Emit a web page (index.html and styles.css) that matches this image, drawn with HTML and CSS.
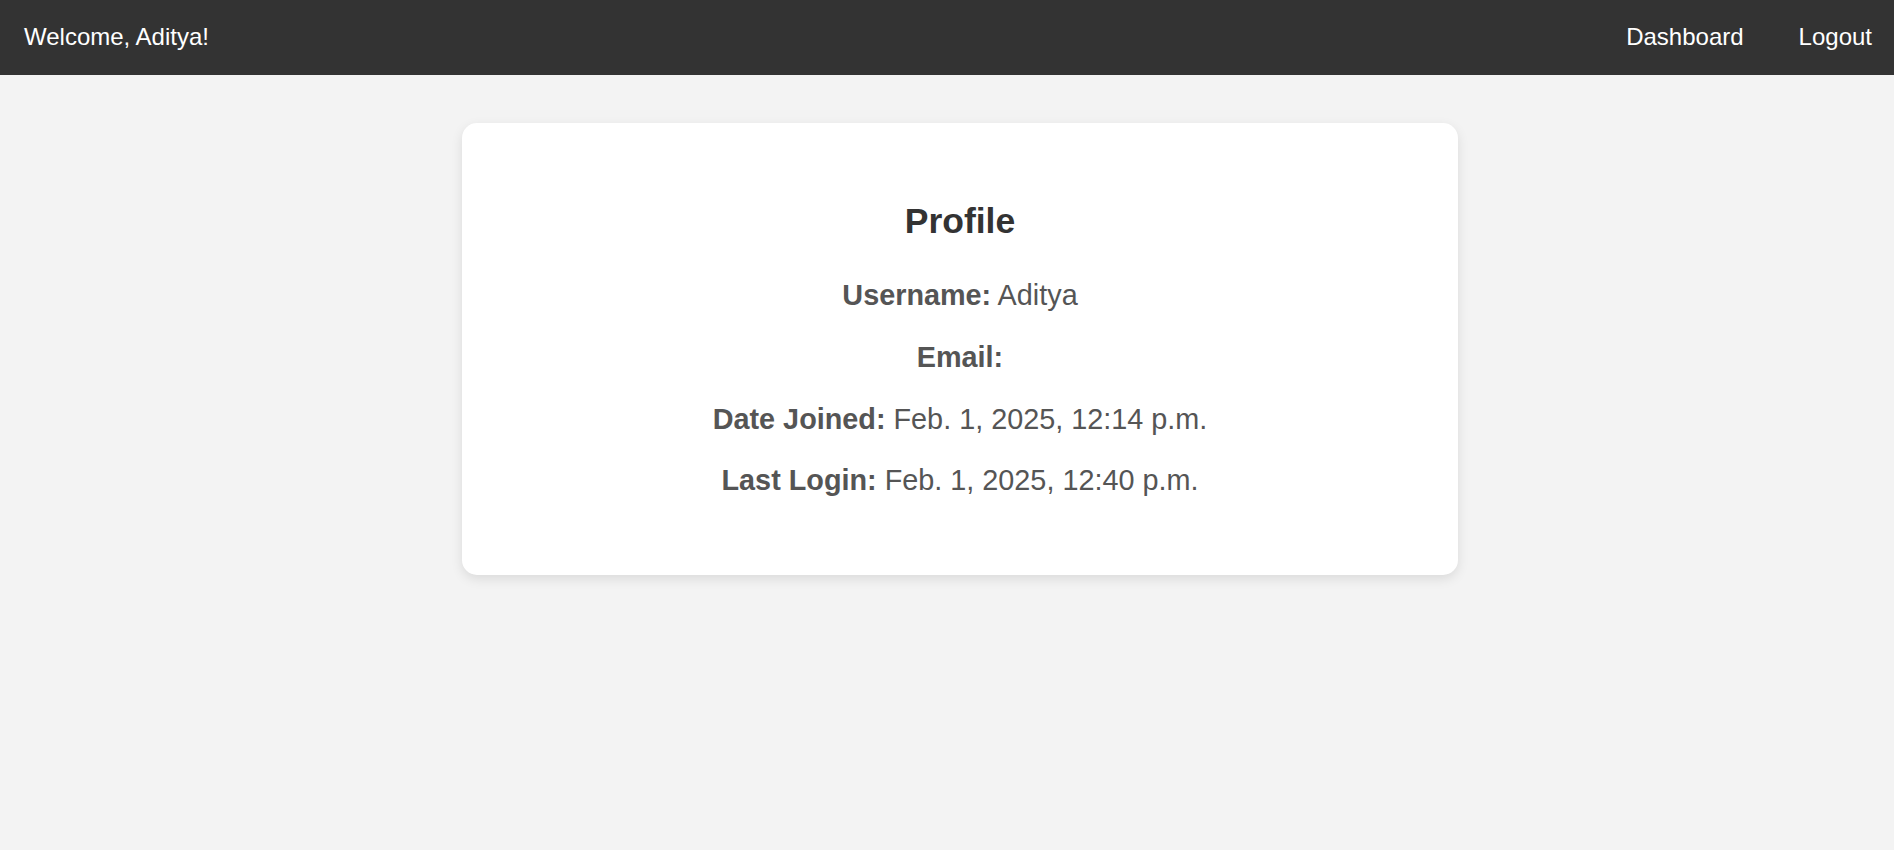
FILE: index.html
```html
<!DOCTYPE html>
<html lang="en">
<head>
<meta charset="utf-8">
<title>Profile</title>
<link rel="stylesheet" href="styles.css">
</head>
<body>
<nav class="navbar">
  <span class="welcome">Welcome, Aditya!</span>
  <div class="nav-links">
    <a href="#" class="nav-link">Dashboard</a>
    <a href="#" class="nav-link">Logout</a>
  </div>
</nav>
<main class="main">
  <section class="card">
    <h2 class="card-title">Profile</h2>
    <p class="row"><strong>Username:</strong> Aditya</p>
    <p class="row"><strong>Email:</strong> </p>
    <p class="row"><strong>Date Joined:</strong> Feb. 1, 2025, 12:14 p.m.</p>
    <p class="row"><strong>Last Login:</strong> Feb. 1, 2025, 12:40 p.m.</p>
  </section>
</main>
</body>
</html>
```
FILE: styles.css
```css
html, body {
  margin: 0;
  padding: 0;
}
body {
  background: #f3f3f3;
  font-family: "Liberation Sans", Arial, sans-serif;
  min-height: 850px;
}
.navbar {
  height: 75px;
  box-sizing: border-box;
  background: #333333;
  color: #ffffff;
  display: flex;
  align-items: center;
  justify-content: space-between;
  padding: 0 22px 2px 24px;
  font-size: 24px;
}
.nav-links {
  display: flex;
  gap: 55px;
}
.nav-link {
  color: #ffffff;
  text-decoration: none;
}
.main {
  display: flex;
  justify-content: center;
  padding: 48px 0 0 26px;
}
.card {
  width: 996px;
  box-sizing: border-box;
  background: #ffffff;
  border-radius: 15px;
  box-shadow: 0 4px 12px rgba(0, 0, 0, 0.1);
  padding: 50px 40px 48.5px;
  text-align: center;
}
.card-title {
  font-size: 35.5px;
  font-weight: bold;
  color: #333333;
  margin: 27.6px 0 37.4px;
}
.row {
  font-size: 28.8px;
  color: #555555;
  margin: 28.8px 0;
}
.row:first-of-type {
  margin-top: 0;
}
```
